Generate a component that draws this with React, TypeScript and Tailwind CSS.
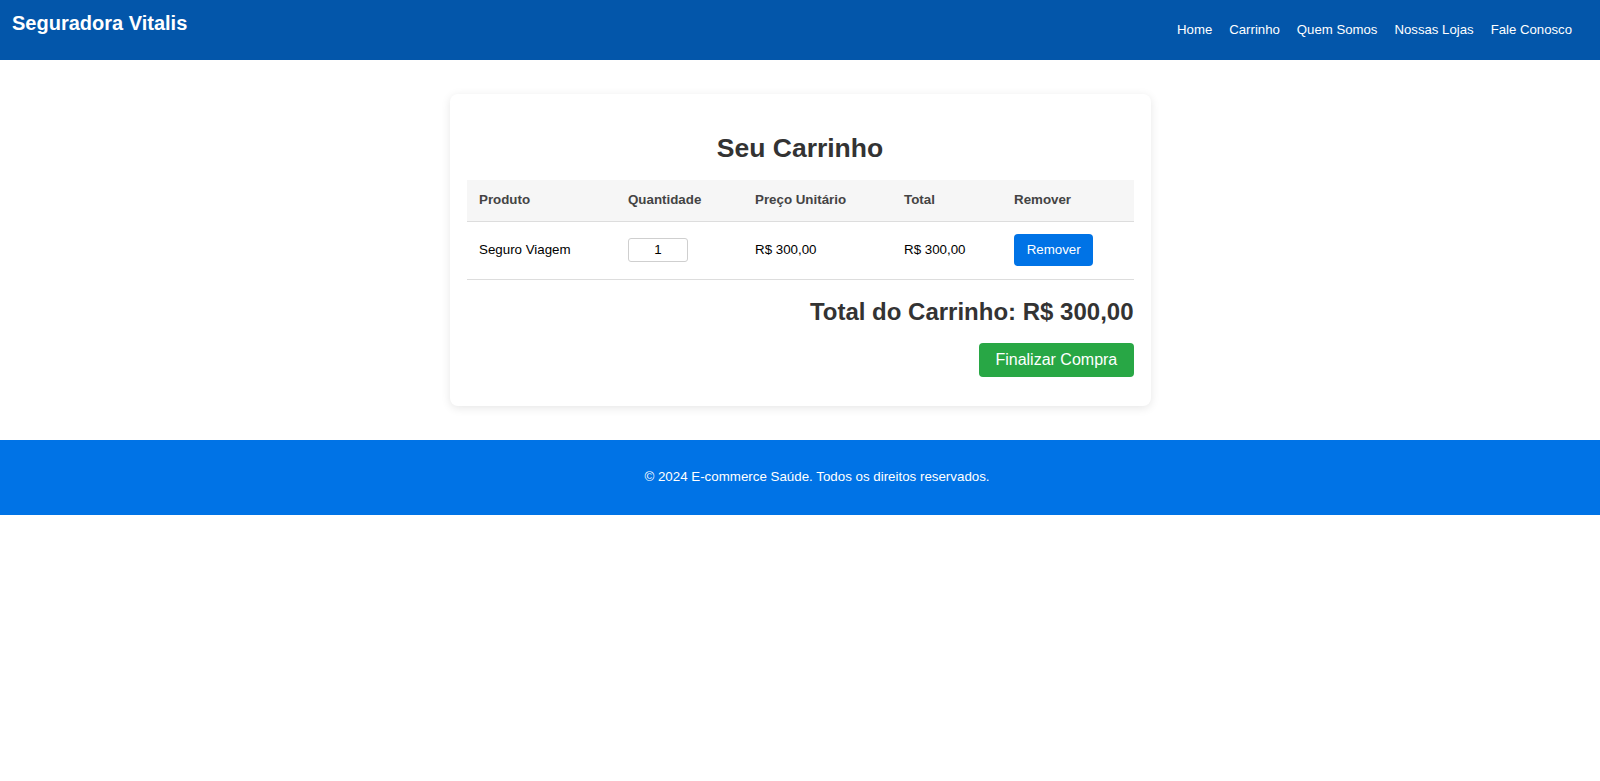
const navLinks = ["Home", "Carrinho", "Quem Somos", "Nossas Lojas", "Fale Conosco"];

const cartItems = [{ id: "1", name: "Seguro Viagem", quantity: 1, price: "R$ 300,00", total: "R$ 300,00" }];

const Header = () => {
  return (
    <header className="flex h-[60px] items-start justify-between bg-[#0356aa] pl-[12px] pr-[28px] pt-[12px]">
      <h1 className="text-[20px] font-bold leading-[23px] text-white">Seguradora Vitalis</h1>
      <nav className="pt-[10px]">
        <ul className="flex gap-[17px] text-[13.2px] leading-[15px] text-white">
          {navLinks.map((link) => (
            <li key={link}>
              <a href="#">{link}</a>
            </li>
          ))}
        </ul>
      </nav>
    </header>
  );
};

const CartTable = () => {
  return (
    <table className="w-full table-fixed border-collapse text-left text-[13.33px]">
      <thead>
        <tr className="h-[41px] border-b border-[#dddddd] bg-[#f6f6f6] text-[#444]">
          <th className="w-[149px] px-[12.5px] font-bold">Produto</th>
          <th className="w-[127px] px-[12.5px] font-bold">Quantidade</th>
          <th className="w-[149px] px-[12.5px] font-bold">Preço Unitário</th>
          <th className="w-[110px] px-[12.5px] font-bold">Total</th>
          <th className="px-[12.5px] font-bold">Remover</th>
        </tr>
      </thead>
      <tbody>
        {cartItems.map((item) => (
          <tr key={item.id} className="h-[58px] border-b border-[#dddddd] text-black">
            <td className="px-[12.5px]">{item.name}</td>
            <td className="px-[12.5px]">
              <input
                type="text"
                defaultValue={item.quantity}
                className="h-[24.4px] w-[60px] rounded-[3px] border border-[#cfcfcf] bg-white text-center text-[13.33px] text-black outline-none"
              />
            </td>
            <td className="px-[12.5px]">{item.price}</td>
            <td className="px-[12.5px]">{item.total}</td>
            <td className="px-[12.5px]">
              <button className="h-[31.7px] w-[79.4px] rounded-[4px] bg-[#0073e6] text-[13.33px] text-white">
                Remover
              </button>
            </td>
          </tr>
        ))}
      </tbody>
    </table>
  );
};

export default function App() {
  return (
    <div className="min-h-screen bg-white font-['Liberation_Sans',Arial,sans-serif]">
      <Header />
      <main className="py-[34px]">
        <div className="mx-auto w-[701px] rounded-[8px] bg-white p-[17px] shadow-[0_2px_10px_rgba(0,0,0,0.1)]">
          <h2 className="mb-[17.5px] mt-[21.5px] text-center text-[26.5px] font-bold leading-[30px] text-[#333]">
            Seu Carrinho
          </h2>
          <CartTable />
          <p className="mt-[18.5px] text-right text-[24px] font-bold leading-[27px] text-[#333]">
            Total do Carrinho: R$ 300,00
          </p>
          <div className="mb-[12px] mt-[17.6px] flex justify-end">
            <button className="h-[34.3px] w-[154.3px] rounded-[4px] bg-[#28a745] text-[16px] text-white">
              Finalizar Compra
            </button>
          </div>
        </div>
      </main>
      <footer className="flex h-[75px] items-center justify-center bg-[#0073e6] pl-[34px] text-[13.33px] text-white">
        <p>© 2024 E-commerce Saúde. Todos os direitos reservados.</p>
      </footer>
    </div>
  );
}
